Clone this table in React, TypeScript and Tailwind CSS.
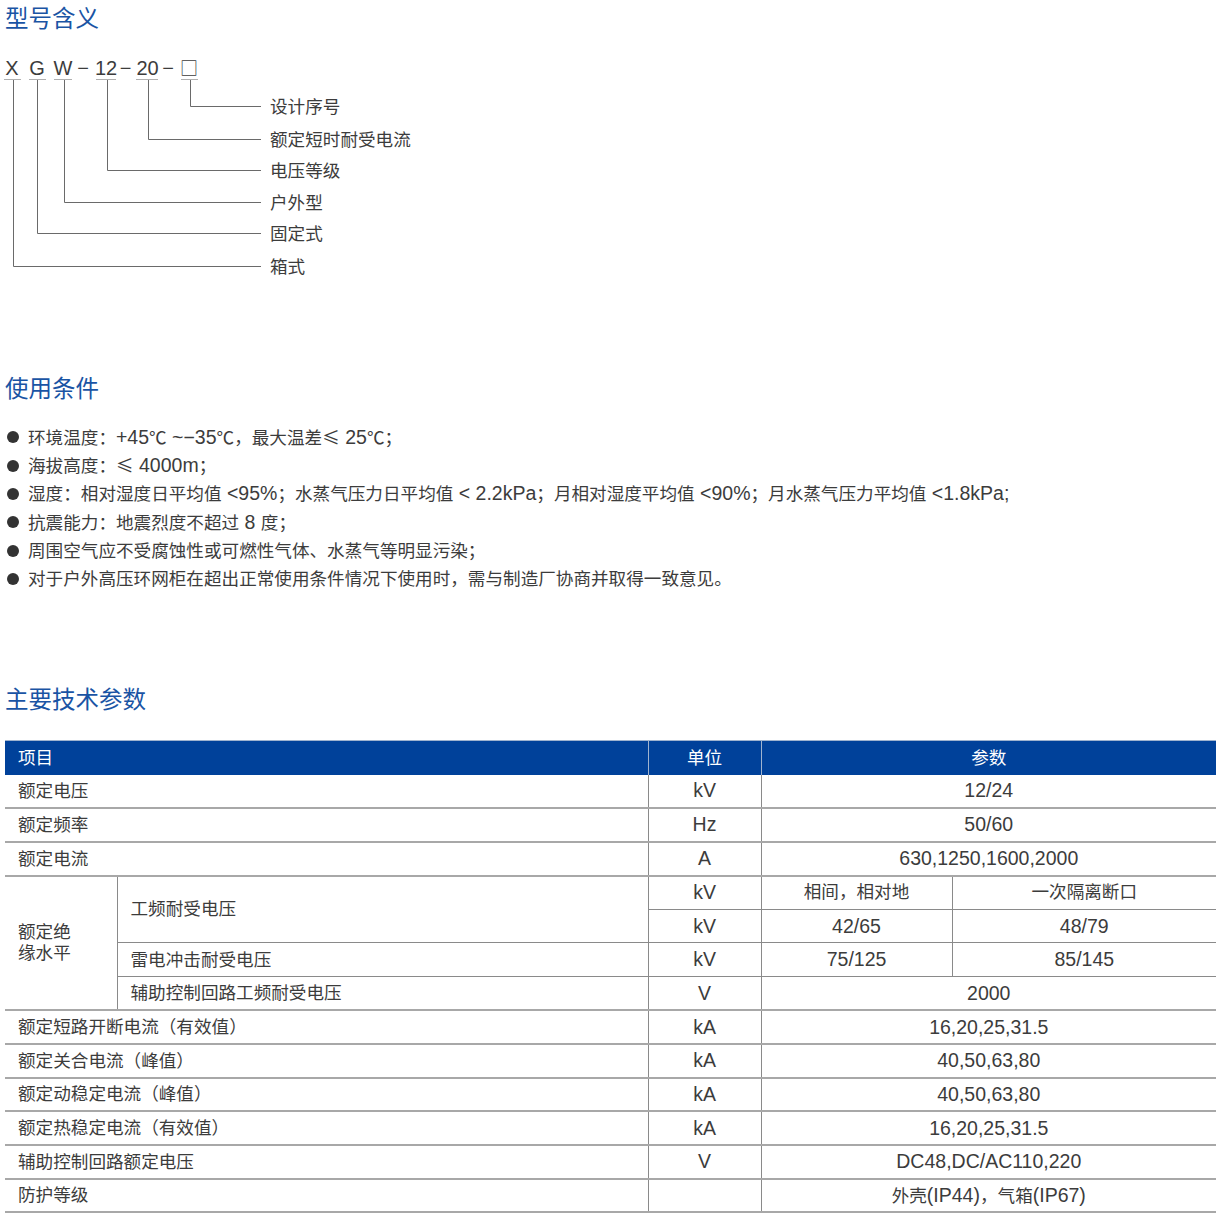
import type { ReactNode } from "react"

const conditions = [
  "环境温度：+45℃ ~−35℃，最大温差≤ 25℃；",
  "海拔高度：≤ 4000m；",
  "湿度：相对湿度日平均值 <95%；水蒸气压力日平均值 < 2.2kPa；月相对湿度平均值 <90%；月水蒸气压力平均值 <1.8kPa;",
  "抗震能力：地震烈度不超过 8 度；",
  "周围空气应不受腐蚀性或可燃性气体、水蒸气等明显污染；",
  "对于户外高压环网柜在超出正常使用条件情况下使用时，需与制造厂协商并取得一致意见。",
]

// Latin runs are set a touch larger than the CJK text, symbols come from the CJK face
function Mixed({ text }: { text: string }) {
  const parts = text.match(/[\x20-\x7e\u2212]+|[℃≤]+|[^\x20-\x7e\u2212℃≤]+/g) ?? []
  const out: ReactNode[] = parts.map((p, i) => {
    if (/^[℃≤]+$/.test(p)) {
      return (
        <span key={i} className="font-['Noto_Sans_CJK_SC',sans-serif]">
          {p}
        </span>
      )
    }
    if (/^[\x20-\x7e\u2212]+$/.test(p)) {
      return (
        <span key={i} className="text-[19.5px]">
          {p}
        </span>
      )
    }
    return <span key={i}>{p}</span>
  })
  return <>{out}</>
}

// model code pieces: label, centre x
const codeParts: [string, number][] = [
  ["X", 12],
  ["G", 37],
  ["W", 63],
  ["−", 83],
  ["12", 106],
  ["−", 125.5],
  ["20", 147.5],
  ["−", 168],
]

// underline segment, drop line x, level y, label (page coords, svg top = 35)
const legs = [
  { x1: 181, x2: 198, x: 190, y: 106, label: "设计序号" },
  { x1: 136, x2: 158, x: 148, y: 139, label: "额定短时耐受电流" },
  { x1: 96, x2: 116, x: 107, y: 170, label: "电压等级" },
  { x1: 54, x2: 72, x: 64, y: 202, label: "户外型" },
  { x1: 29, x2: 46, x: 37, y: 233, label: "固定式" },
  { x1: 4, x2: 21, x: 13, y: 266, label: "箱式" },
]

const OFF = 35

function ModelDiagram() {
  return (
    <svg width="430" height="245" className="block" style={{ fontFamily: "'Liberation Sans','Noto Sans CJK SC',sans-serif" }}>
      {codeParts.map(([t, cx], i) => (
        <text key={i} x={cx} y={75 - OFF} textAnchor="middle" fontSize="20" fill="#3c3c3c">
          {t}
        </text>
      ))}
      <text x={189} y={75 - OFF} textAnchor="middle" fontSize="18" fill="#3c3c3c" style={{ fontFamily: "'Noto Sans CJK SC',sans-serif" }}>
        □
      </text>
      {legs.map((l) => (
        <g key={l.label} strokeWidth="1" fill="none">
          <line x1={l.x1} x2={l.x2} y1={79.5 - OFF} y2={79.5 - OFF} stroke="#b0b0b0" />
          <polyline points={`${l.x + 0.5},${80 - OFF} ${l.x + 0.5},${l.y + 0.5 - OFF} 261,${l.y + 0.5 - OFF}`} stroke="#6a6a6a" />
        </g>
      ))}
      {legs.map((l) => (
        <text key={l.label + "t"} x={270} y={l.y + 6.5 - OFF} fontSize="17.6" fill="#3c3c3c">
          {l.label}
        </text>
      ))}
    </svg>
  )
}

const cellBase = "border-x border-[#8a8a8a] px-[13px] align-middle"
const rowLine = "border-b-2 border-[#a8a8a8]"

function SpecTable() {
  const simple: [string, string, string][] = [
    ["额定电压", "kV", "12/24"],
    ["额定频率", "Hz", "50/60"],
    ["额定电流", "A", "630,1250,1600,2000"],
  ]
  const tail: [string, string, string][] = [
    ["额定短路开断电流（有效值）", "kA", "16,20,25,31.5"],
    ["额定关合电流（峰值）", "kA", "40,50,63,80"],
    ["额定动稳定电流（峰值）", "kA", "40,50,63,80"],
    ["额定热稳定电流（有效值）", "kA", "16,20,25,31.5"],
    ["辅助控制回路额定电压", "V", "DC48,DC/AC110,220"],
    ["防护等级", "", "外壳(IP44)，气箱(IP67)"],
  ]

  return (
    <table className="w-[1211px] table-fixed border-collapse text-[17.6px] text-[#3c3c3c]">
      <colgroup>
        <col className="w-[112px]" />
        <col className="w-[531px]" />
        <col className="w-[113px]" />
        <col className="w-[191px]" />
        <col className="w-[264px]" />
      </colgroup>
      <thead>
        <tr className="h-[33.7px] bg-[#00419a] text-white">
          <th colSpan={2} className="border-t border-[#9fb3cf] px-[13px] text-left font-normal">项目</th>
          <th className="border-x border-t border-[#9fb3cf] text-center font-normal">单位</th>
          <th colSpan={2} className="border-t border-[#9fb3cf] text-center font-normal">参数</th>
        </tr>
      </thead>
      <tbody>
        {simple.map(([a, u, v]) => (
          <tr key={a} className={`h-[33.7px] ${rowLine}`}>
            <td colSpan={2} className={`${cellBase} border-l-0`}>{a}</td>
            <td className={`${cellBase} text-center`}><Mixed text={u} /></td>
            <td colSpan={2} className={`${cellBase} border-r-0 text-center`}><Mixed text={v} /></td>
          </tr>
        ))}

        <tr className="h-[33.7px] border-b border-[#8a8a8a]">
          <td rowSpan={4} className={`${cellBase} border-l-0 border-b-2 border-b-[#a8a8a8] leading-[21px]`}>
            额定绝
            <br />
            缘水平
          </td>
          <td rowSpan={2} className={`${cellBase} border-b border-b-[#8a8a8a]`}>工频耐受电压</td>
          <td className={`${cellBase} text-center`}><Mixed text="kV" /></td>
          <td className={`${cellBase} text-center`}>相间，相对地</td>
          <td className={`${cellBase} border-r-0 text-center`}>一次隔离断口</td>
        </tr>
        <tr className="h-[33.7px] border-b border-[#8a8a8a]">
          <td className={`${cellBase} text-center`}><Mixed text="kV" /></td>
          <td className={`${cellBase} text-center`}><Mixed text="42/65" /></td>
          <td className={`${cellBase} border-r-0 text-center`}><Mixed text="48/79" /></td>
        </tr>
        <tr className="h-[33.7px] border-b border-[#8a8a8a]">
          <td className={cellBase}>雷电冲击耐受电压</td>
          <td className={`${cellBase} text-center`}><Mixed text="kV" /></td>
          <td className={`${cellBase} text-center`}><Mixed text="75/125" /></td>
          <td className={`${cellBase} border-r-0 text-center`}><Mixed text="85/145" /></td>
        </tr>
        <tr className={`h-[33.7px] ${rowLine}`}>
          <td className={cellBase}>辅助控制回路工频耐受电压</td>
          <td className={`${cellBase} text-center`}><Mixed text="V" /></td>
          <td colSpan={2} className={`${cellBase} border-r-0 text-center`}><Mixed text="2000" /></td>
        </tr>

        {tail.map(([a, u, v], i) => (
          <tr key={a + i} className={`h-[33.7px] ${rowLine}`}>
            <td colSpan={2} className={`${cellBase} border-l-0`}>{a}</td>
            <td className={`${cellBase} text-center`}><Mixed text={u} /></td>
            <td colSpan={2} className={`${cellBase} border-r-0 text-center`}><Mixed text={v} /></td>
          </tr>
        ))}
      </tbody>
    </table>
  )
}

export default function App() {
  return (
    <div className="min-h-[1221px] w-[1220px] bg-white px-[5px] pt-[3px] font-['Liberation_Sans','Noto_Sans_CJK_SC',sans-serif] text-[#3c3c3c]">
      <h2 className="text-[23.5px] leading-[32px] text-[#1a54a4]">型号含义</h2>
      <div className="-ml-[5px]">
        <ModelDiagram />
      </div>

      <h2 className="mt-[93px] text-[23.5px] leading-[32px] text-[#1a54a4]">使用条件</h2>
      <ul className="mt-[18px] text-[17.6px] leading-[28.4px]">
        {conditions.map((c) => (
          <li key={c} className="flex h-[28.4px] items-center">
            <span className="ml-[2px] mr-[9px] h-[12px] w-[12px] shrink-0 rounded-full bg-[#333]" />
            <span>
              <Mixed text={c} />
            </span>
          </li>
        ))}
      </ul>

      <h2 className="mt-[91px] text-[23.5px] leading-[32px] text-[#1a54a4]">主要技术参数</h2>
      <div className="mt-[24px]">
        <SpecTable />
      </div>
    </div>
  )
}
